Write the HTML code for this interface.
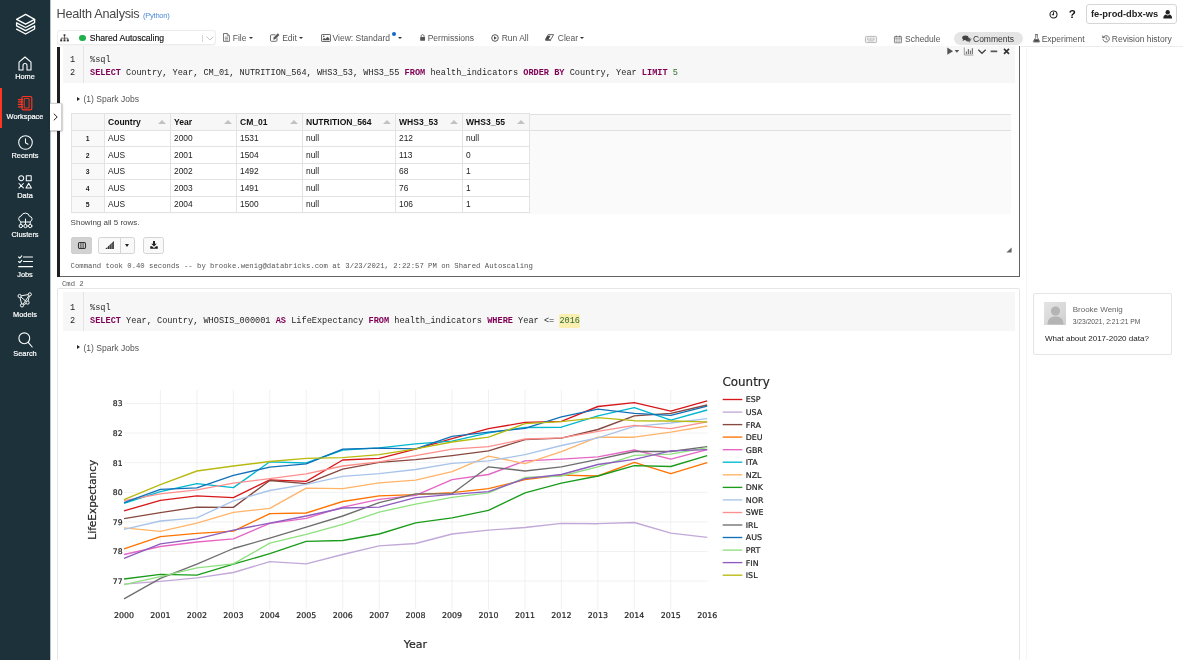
<!DOCTYPE html>
<html><head><meta charset="utf-8"><title>Health Analysis - Databricks</title>
<style>
*{box-sizing:border-box;margin:0;padding:0}
html,body{width:1183px;height:660px;overflow:hidden;background:#fff}
body{font-family:"Liberation Sans",sans-serif;font-size:9px;color:#333;position:relative;will-change:transform}
.abs{position:absolute;white-space:nowrap}
.mono{font-family:"Liberation Mono","DejaVu Sans Mono",monospace}
#side{position:absolute;left:0;top:0;width:50px;height:660px;background:#1c313a}
#side .lbl{position:absolute;left:0;width:50px;text-align:center;color:#fff;font-size:7.4px;line-height:9px;-webkit-text-stroke:0.2px #fff}
#side svg{position:absolute;overflow:visible}
.tb{position:absolute;top:32.5px;font-size:8.5px;line-height:11px;color:#555;white-space:nowrap}
.ic{position:absolute;overflow:visible}
.caret{position:absolute;width:0;height:0;border-left:2.5px solid transparent;border-right:2.5px solid transparent;border-top:2.8px solid #333}
.kw{color:#7f0055;font-weight:bold}
.num{color:#2f6f2f}
table.res{position:absolute;left:70.6px;top:113.2px;border-collapse:collapse;font-size:8.4px;color:#222;table-layout:fixed}
table.res td,table.res th{border:1px solid #e3e3e3;height:16.55px;padding:0 0 1px 3.4px;text-align:left;background:#fff;white-space:nowrap;position:relative}
table.res th{background:#f7f7f7;font-weight:bold;font-size:8.55px;color:#111;padding:1px 0 0 3.4px}
table.res td.ix{background:#f9f9f9;font-weight:bold;font-size:6.8px;text-align:center;padding:0}
table.res th i{position:absolute;right:4px;top:6px;width:0;height:0;border-left:4.2px solid transparent;border-right:4.2px solid transparent;border-bottom:4.3px solid #c2c2c2}
.chart text{stroke:#1e1e1e;stroke-width:0.2px}
</style></head><body>

<!-- ===== sidebar ===== -->
<div id="side">
  <div style="position:absolute;left:0;top:88px;width:2px;height:40px;background:#ff3621"></div>
    <!-- logo -->
  <svg style="left:15px;top:13px" width="21" height="22" viewBox="0 0 21 22" fill="none" stroke="#fff" stroke-width="1.35" stroke-linejoin="round" stroke-linecap="round"><path d="M1.6 6.3 L10.6 1.4 L19.6 6.3 L10.6 11.2 Z"/><path d="M19.6 6.3 V9.6 L10.6 14.5 L1.6 9.8 V12.8 L10.6 17.6 L19.6 12.8 V16 L10.6 21 L1.6 16.1"/></svg>
  <!-- home -->
  <svg style="left:18px;top:56px" width="14" height="15" viewBox="0 0 14 15" fill="none" stroke="#fff" stroke-width="1.1" stroke-linejoin="round" stroke-linecap="round"><path d="M1 6.2 L7 1 L13 6.2 V14 H9 V9.5 a2 2 0 0 0 -4 0 V14 H1 Z"/></svg>
  <!-- workspace -->
  <svg style="left:17px;top:95px" width="16" height="16" viewBox="0 0 16 16" fill="none" stroke="#ff3621" stroke-width="1.15" stroke-linejoin="round" stroke-linecap="round"><rect x="4.9" y="1.5" width="9.9" height="13.4" rx="1.6"/><rect x="7.6" y="3.4" width="4.5" height="9.6" stroke-width="0.9"/><path d="M1.4 4.6H5.6M1.4 6.9H5.6M1.4 9.4H5.6M1.4 11.8H5.6"/></svg>
  <!-- recents -->
  <svg style="left:17.5px;top:134.5px" width="15" height="15" viewBox="0 0 15 15" fill="none" stroke="#fff" stroke-width="1.05" stroke-linecap="round" stroke-linejoin="round"><circle cx="7.5" cy="7.5" r="6.8"/><path d="M7.5 3.8 V7.8 L10 9.3"/></svg>
  <!-- data -->
  <svg style="left:18px;top:174.5px" width="14" height="14" viewBox="0 0 14 14" fill="none" stroke="#fff" stroke-width="1.05" stroke-linejoin="round" stroke-linecap="round"><circle cx="3.2" cy="3.2" r="2.5"/><rect x="8.3" y="0.8" width="4.9" height="4.9"/><path d="M1 8.5 L5.4 12.9 M5.4 8.5 L1 12.9"/><path d="M10.7 8.2 L13.4 13 H8 Z"/></svg>
  <!-- clusters -->
  <svg style="left:16.5px;top:213px" width="17" height="16" viewBox="0 0 17 16" fill="none" stroke="#fff" stroke-width="1" stroke-linejoin="round" stroke-linecap="round"><path d="M3.6 8.6 a2.9 2.9 0 0 1 0.6 -5.6 a4.4 4.4 0 0 1 8.4 0.4 a2.7 2.7 0 0 1 0.8 5.2"/><path d="M8.5 6 V11 M3.8 11.3 V9 H13.2 V11.3"/><circle cx="3.8" cy="13" r="1.7"/><circle cx="8.5" cy="13" r="1.7"/><circle cx="13.2" cy="13" r="1.7"/></svg>
  <!-- jobs -->
  <svg style="left:17.5px;top:254.5px" width="15" height="13" viewBox="0 0 15 13" fill="none" stroke="#fff" stroke-width="1.1" stroke-linecap="round" stroke-linejoin="round"><path d="M5.5 2 H14.5 M5.5 6.5 H14.5 M0.6 11.6 H14.5"/><path d="M0.6 2 L1.8 3.2 L3.8 0.8 M0.6 6.5 L1.8 7.7 L3.8 5.3"/></svg>
  <!-- models -->
  <svg style="left:17px;top:292px" width="16" height="16" viewBox="0 0 16 16" fill="none" stroke="#fff" stroke-width="0.95" stroke-linejoin="round"><circle cx="2.6" cy="4" r="1.6"/><circle cx="12.8" cy="2.4" r="1.6"/><circle cx="10.6" cy="10.6" r="1.6"/><circle cx="5" cy="13.4" r="1.6"/><path d="M4.2 3.8 L11.2 2.6 M12.4 4 L11 9 M9.2 11.4 L6.5 12.8 M3 5.6 L4.6 11.8 M3.9 5 L9.4 9.6 M6.2 12.2 L11.8 3.8"/></svg>
  <!-- search -->
  <svg style="left:17.5px;top:332px" width="15" height="16" viewBox="0 0 15 16" fill="none" stroke="#fff" stroke-width="1.1" stroke-linecap="round"><circle cx="6.3" cy="6.3" r="5.4"/><path d="M10.2 10.4 L14.2 15"/></svg>

  <div class="lbl" style="top:72.0px">Home</div>
  <div class="lbl" style="top:112.0px">Workspace</div>
  <div class="lbl" style="top:151.0px">Recents</div>
  <div class="lbl" style="top:191.0px">Data</div>
  <div class="lbl" style="top:230.0px">Clusters</div>
  <div class="lbl" style="top:270.0px">Jobs</div>
  <div class="lbl" style="top:310.0px">Models</div>
  <div class="lbl" style="top:349.0px">Search</div>
</div>

<!-- ===== header ===== -->
<div class="abs" style="left:50px;top:0;width:1px;height:660px;background:#b9c0c3"></div>
<div class="abs" style="left:56.6px;top:5.5px;font-size:12.7px;line-height:16px;color:#484848;letter-spacing:-0.26px">Health Analysis</div>
<div class="abs" style="left:143px;top:11.1px;font-size:7.6px;line-height:10px;color:#4f8bdb;letter-spacing:-0.28px">(Python)</div>
<svg class="ic" style="left:1048.6px;top:9.5px" width="9" height="9" viewBox="0 0 9 9" fill="none" stroke="#222" stroke-width="1.1" stroke-linecap="round"><circle cx="4.5" cy="4.5" r="3.5"/><path d="M4.5 2.5V4.7H3.2"/></svg>
<div class="abs" style="left:1068.8px;top:7px;font-size:11.6px;line-height:13px;font-weight:bold;color:#111">?</div>
<div class="abs" style="left:1086px;top:4px;width:91px;height:19.5px;border:1px solid #d6d6d6;border-radius:3px;background:#fff"></div>
<div class="abs" style="left:1091px;top:9px;font-size:9.3px;line-height:11px;font-weight:bold;color:#222">fe-prod-dbx-ws</div>
<svg class="ic" style="left:1162.6px;top:9.6px" width="9.4" height="9" viewBox="0 0 10 9" preserveAspectRatio="none" fill="#222"><circle cx="5" cy="2.3" r="2.3"/><path d="M0.3 8.6 C0.3 5.6 2 4.6 3.2 4.6 C3.8 5.2 4.4 5.4 5 5.4 C5.6 5.4 6.2 5.2 6.8 4.6 C8 4.6 9.7 5.6 9.7 8.6 Z"/></svg>

<!-- cluster dropdown -->
<div class="abs" style="left:57px;top:29.5px;width:158.5px;height:15.5px;border:1px solid #ececec;border-radius:3.5px;background:#fff;box-shadow:0 0.5px 1px rgba(0,0,0,0.05)"></div>
<svg class="ic" style="left:60px;top:34px" width="9" height="8" viewBox="0 0 9 8" fill="#333" stroke="#333" stroke-width="0.7"><rect x="3.6" y="0.3" width="1.8" height="1.8" stroke="none"/><path d="M4.5 2V5.5M1.2 5.5V4.1H7.8V5.5" fill="none"/><rect x="0.2" y="5.4" width="2" height="2" stroke="none"/><rect x="3.5" y="5.4" width="2" height="2" stroke="none"/><rect x="6.8" y="5.4" width="2" height="2" stroke="none"/></svg>
<div class="abs" style="left:79.4px;top:35.2px;width:6.3px;height:6.3px;border-radius:4px;background:#1fb24a"></div>
<div class="abs" style="left:89.7px;top:32.5px;font-size:8.65px;line-height:11px;color:#111;-webkit-text-stroke:0.15px #111">Shared Autoscaling</div>
<div class="abs" style="left:201.5px;top:35px;width:1px;height:6.5px;background:#d6d6d6"></div>
<svg class="ic" style="left:206px;top:36px" width="8" height="5" viewBox="0 0 8 5" fill="none" stroke="#bdbdbd" stroke-width="0.9" stroke-linecap="round" stroke-linejoin="round"><path d="M0.8 0.8L4 4L7.2 0.8"/></svg>

<svg class="ic" style="left:222.8px;top:33px" width="7" height="9" viewBox="0 0 7 9" fill="none" stroke="#555" stroke-width="0.8" stroke-linejoin="round"><path d="M0.5 0.5H4.2L6.4 2.7V8.4H0.5Z"/><path d="M4.2 0.5V2.7H6.4M1.8 4.2H5M1.8 5.6H5M1.8 7H5" stroke-width="0.6"/></svg>
<div class="tb" style="left:232.7px">File</div><i class="caret" style="left:249.3px;top:37px"></i>
<svg class="ic" style="left:270px;top:33px" width="10" height="9" viewBox="0 0 10 9" fill="none" stroke="#555" stroke-width="0.85" stroke-linejoin="round" stroke-linecap="round"><path d="M7 5.2V7.4a0.9 0.9 0 0 1-0.9 0.9H1.4a0.9 0.9 0 0 1-0.9-0.9V2.7a0.9 0.9 0 0 1 0.9-0.9H5"/><path d="M3.6 6.2L3.9 4.5L7.8 0.6L9.2 2L5.3 5.9Z" fill="#555" stroke-width="0.4"/></svg>
<div class="tb" style="left:282.2px">Edit</div><i class="caret" style="left:299px;top:37px"></i>
<svg class="ic" style="left:320.7px;top:33.5px" width="10" height="8" viewBox="0 0 10 8" fill="none" stroke="#555" stroke-width="0.85" stroke-linejoin="round"><rect x="0.5" y="0.5" width="9" height="7" rx="0.6"/><path d="M1.6 6.3V5.4L3.2 3.8L4.4 5L6.6 2.8L8.4 4.6V6.3Z" fill="#555" stroke="none"/><circle cx="2.7" cy="2.4" r="0.8" fill="#555" stroke="none"/></svg>
<div class="tb" style="left:332.6px">View: Standard</div>
<div class="abs" style="left:392px;top:31.9px;width:3.8px;height:3.8px;border-radius:2px;background:#1268c9"></div>
<i class="caret" style="left:397.5px;top:37px"></i>
<svg class="ic" style="left:419.7px;top:33.8px" width="5.2" height="7" viewBox="0 0 6 8" fill="#555"><rect x="0.2" y="3.3" width="5.6" height="4.4" rx="0.5"/><path d="M1.3 3.6V2.4a1.7 1.7 0 0 1 3.4 0V3.6" fill="none" stroke="#555" stroke-width="0.9"/></svg>
<div class="tb" style="left:427.7px">Permissions</div>
<svg class="ic" style="left:491.3px;top:33.8px" width="8" height="8" viewBox="0 0 8 8" fill="none" stroke="#444" stroke-width="0.9"><circle cx="4" cy="4" r="3.3"/><path d="M3 2.3L5.8 4L3 5.7Z" fill="#444" stroke="none"/></svg>
<div class="tb" style="left:501.7px">Run All</div>
<svg class="ic" style="left:545.3px;top:34px" width="9" height="7" viewBox="0 0 9 7" fill="none" stroke="#444" stroke-width="0.8" stroke-linejoin="round"><path d="M3.2 0.6H8.6L5.8 5.6H0.4Z"/><path d="M2.6 1.7L0.4 5.6H3.4L5.6 1.7Z" fill="#444" stroke="none"/><path d="M0.4 6.4H6" /></svg>
<div class="tb" style="left:557.8px">Clear</div><i class="caret" style="left:580px;top:37px"></i>

<svg class="ic" style="left:865.3px;top:35.5px" width="12" height="7" viewBox="0 0 12 7" fill="none" stroke="#a8a8a8" stroke-width="0.8"><rect x="0.4" y="0.4" width="11.2" height="6.2" rx="1.2" fill="#f1f1f1"/><path d="M2 2.3H10M2 3.6H10" stroke="#b4b4b4" stroke-width="0.8" stroke-dasharray="1 0.5"/><path d="M3.2 4.9H8.8" stroke="#b4b4b4" stroke-width="0.8"/></svg>
<svg class="ic" style="left:894.3px;top:34.8px" width="8" height="8.5" viewBox="0 0 9 9" fill="none" stroke="#666" stroke-width="0.8"><rect x="0.5" y="1.4" width="8" height="7.1" rx="0.5"/><path d="M0.5 3.2H8.5" /><path d="M2.5 0.3V2.2M6.5 0.3V2.2" stroke-width="1"/><path d="M3.1 3.2V8.5M5.8 3.2V8.5M0.5 5V5H8.5M0.5 6.8H8.5" stroke-width="0.35"/></svg>
<div class="tb" style="left:905px;top:34px">Schedule</div>
<div class="abs" style="left:953.5px;top:32.3px;width:69px;height:13.1px;border-radius:6.5px;background:#e5e5e5"></div>
<svg class="ic" style="left:961.7px;top:35px" width="9" height="8" viewBox="0 0 9 8" fill="#444"><ellipse cx="3.4" cy="2.8" rx="3.2" ry="2.3"/><path d="M1.2 4L0.6 6L3 4.8Z"/><path d="M7.2 2.4a2.6 2 0 0 1 -1.6 4.2 L7.8 7.6 L7.4 6 a2.3 1.8 0 0 0 -0.2 -3.6Z"/><ellipse cx="6" cy="4.6" rx="2.7" ry="1.9" opacity="0.9"/></svg>
<div class="tb" style="left:973px;top:34px;color:#333">Comments</div>
<svg class="ic" style="left:1033px;top:34px" width="7" height="8.5" viewBox="0 0 7 8.5" fill="none" stroke="#555" stroke-width="0.8" stroke-linejoin="round"><path d="M2.1 0.5H4.9M2.7 0.5V3.4L0.4 7.4a0.4 0.4 0 0 0 0.4 0.6H6.2a0.4 0.4 0 0 0 0.4-0.6L4.3 3.4V0.5"/><path d="M1.7 5.2H5.3L6.4 7.7H0.6Z" fill="#444" stroke="none"/></svg>
<div class="tb" style="left:1041.7px;top:34px">Experiment</div>
<svg class="ic" style="left:1102.3px;top:34.7px" width="8" height="8" viewBox="0 0 8 8" fill="none" stroke="#555" stroke-width="0.85" stroke-linecap="round"><path d="M1.3 2.3A3.2 3.2 0 1 1 1 4.6"/><path d="M0.3 0.9L0.7 3L2.8 2.6Z" fill="#555" stroke-width="0.3"/><path d="M4.2 2.3V4.2L5.4 4.9" stroke-width="0.7"/></svg>
<div class="tb" style="left:1111.8px;top:34px">Revision history</div>

<div class="abs" style="left:1021px;top:45.8px;width:162px;height:1px;background:#ececec"></div>
<div class="abs" style="left:1026.3px;top:46.5px;width:1px;height:614px;background:#f6f6f6"></div>
<!-- ===== cell 1 ===== -->
<div class="abs" style="left:59px;top:46px;width:961.3px;height:230.7px;border:1.1px solid #636363;border-top:0;border-left:0;background:#fff"></div>
<div class="abs" style="left:57px;top:46.6px;width:2.6px;height:230.4px;background:#1e1e1e"></div>
<div class="abs" style="left:63px;top:46.3px;width:952.3px;height:36.4px;background:#f7f7f7"></div>
<div class="abs" style="left:83px;top:46.3px;width:1px;height:36.4px;background:#e4e4e4"></div>
<div class="abs mono" style="left:70px;top:53.9px;font-size:8.6px;line-height:12.65px;color:#222">1<br>2</div>
<div class="abs mono" style="left:90px;top:53.9px;font-size:8.6px;line-height:12.65px;color:#262626">%sql<br><span class="kw">SELECT</span> Country, Year, CM_01, NUTRITION_564, WHS3_53, WHS3_55 <span class="kw">FROM</span> health_indicators <span class="kw">ORDER BY</span> Country, Year <span class="kw">LIMIT</span> <span class="num">5</span></div>
<!-- cell controls -->
<svg class="ic" style="left:947px;top:46.9px" width="64" height="9" viewBox="0 0 64 9" fill="#555" stroke="none"><path d="M0.3 0.6L6 4.2L0.3 7.8Z" fill="#555"/><path d="M7.6 3H12.2L9.9 5.8Z"/><path d="M17.3 0.5V8H26.3" fill="none" stroke="#777" stroke-width="0.7"/><path d="M18.8 4.5h1.2V7h-1.2zM20.8 2h1.2V7h-1.2zM22.8 3.4h1.2V7h-1.2zM24.8 1.2h1.2V7h-1.2z" fill="#777"/><path d="M31.3 2.8L35 6.3L38.7 2.8" fill="none" stroke="#444" stroke-width="1.3"/><path d="M43.6 3.5H50.2V5.2H43.6Z"/><path d="M57 1.9L62 6.9M62 1.9L57 6.9" stroke="#333" stroke-width="1.6"/></svg>

<div class="abs" style="left:83.5px;top:94.4px;font-size:8.55px;line-height:11px;color:#555">(1) Spark Jobs</div>
<div class="abs" style="left:76.6px;top:97.3px;width:0;height:0;border-left:3px solid #222;border-top:2.5px solid transparent;border-bottom:2.5px solid transparent"></div>

<div class="abs" style="left:71px;top:113.5px;width:940px;height:100px;background:#fafafa"></div>
<div class="abs" style="left:71px;top:113.5px;width:940px;height:17.5px;background:#f8f8f8;border-top:1px solid #e0e0e0;border-bottom:1px solid #e0e0e0"></div>
<table class="res">
<tr><th style="width:33px"></th><th style="width:66px">Country<i></i></th><th style="width:66px">Year<i></i></th><th style="width:66px">CM_01<i></i></th><th style="width:93px">NUTRITION_564<i></i></th><th style="width:67px">WHS3_53<i></i></th><th style="width:67px">WHS3_55<i></i></th></tr>
<tr><td class="ix">1</td><td>AUS</td><td>2000</td><td>1531</td><td>null</td><td>212</td><td>null</td></tr>
<tr><td class="ix">2</td><td>AUS</td><td>2001</td><td>1504</td><td>null</td><td>113</td><td>0</td></tr>
<tr><td class="ix">3</td><td>AUS</td><td>2002</td><td>1492</td><td>null</td><td>68</td><td>1</td></tr>
<tr><td class="ix">4</td><td>AUS</td><td>2003</td><td>1491</td><td>null</td><td>76</td><td>1</td></tr>
<tr><td class="ix">5</td><td>AUS</td><td>2004</td><td>1500</td><td>null</td><td>106</td><td>1</td></tr>
</table>
<div class="abs" style="left:70.6px;top:218.3px;font-size:8px;line-height:10px;color:#444">Showing all 5 rows.</div>

<div class="abs" style="left:71px;top:237px;width:21.2px;height:16.6px;border:1px solid #cfcfcf;border-radius:2px;background:#d2d2d2"></div>
<svg class="ic" style="left:77.5px;top:241.5px" width="8" height="7" viewBox="0 0 8 7" fill="none" stroke="#333" stroke-width="0.9"><rect x="0.5" y="0.5" width="7" height="6" rx="1.2" stroke-width="1.1"/><path d="M2.9 0.5V6.5M5.1 0.5V6.5" stroke-width="0.9"/></svg>
<div class="abs" style="left:98px;top:237px;width:37.3px;height:16.6px;border:1px solid #d4d4d4;border-radius:2.5px;background:#f9f9f9"></div>
<div class="abs" style="left:120.3px;top:237px;width:1px;height:16.6px;background:#d4d4d4"></div>
<svg class="ic" style="left:104.5px;top:241px" width="9" height="8" viewBox="0 0 9 8" fill="#222"><path d="M0.3 8L8.8 0V8Z" /><path d="M2.6 0V8M4.8 0V8M6.9 0V8" stroke="#f9f9f9" stroke-width="0.6"/></svg>
<i class="caret" style="left:125.4px;top:244px;border-top-color:#222;border-left-width:2.8px;border-right-width:2.8px;border-top-width:3px"></i>
<div class="abs" style="left:142.5px;top:237px;width:21.7px;height:16.6px;border:1px solid #d4d4d4;border-radius:2.5px;background:#f9f9f9"></div>
<svg class="ic" style="left:149.5px;top:241px" width="8" height="8" viewBox="0 0 8 8" fill="#222"><path d="M3 0H5V2.8H6.8L4 5.6L1.2 2.8H3Z"/><path d="M0.2 5.2H2L4 7L6 5.2H7.8V7.8H0.2Z"/></svg>
<div class="abs mono" style="left:70.6px;top:261.8px;font-size:7.28px;line-height:9px;color:#555">Command took 0.40 seconds -- by brooke.wenig@databricks.com at 3/23/2021, 2:22:57 PM on Shared Autoscaling</div>
<svg class="ic" style="left:1005.5px;top:246.5px" width="6" height="6" viewBox="0 0 6 6" fill="#666"><path d="M5.6 0.4V5.6H0.4Z"/></svg>

<div class="abs mono" style="left:62px;top:279.8px;font-size:7.2px;line-height:9px;color:#555">Cmd 2</div>

<!-- ===== cell 2 ===== -->
<div class="abs" style="left:57px;top:288px;width:962.8px;height:380px;border:1px solid #e6e6e6;border-radius:2px;background:#fff"></div>
<div class="abs" style="left:63px;top:292.3px;width:952.3px;height:38.5px;background:#f7f7f7"></div>
<div class="abs" style="left:83px;top:292.3px;width:1px;height:38.5px;background:#e4e4e4"></div>
<div class="abs mono" style="left:70px;top:302.4px;font-size:8.6px;line-height:12.65px;color:#222">1<br>2</div>
<div class="abs mono" style="left:90px;top:302.4px;font-size:8.6px;line-height:12.65px;color:#262626">%sql<br><span class="kw">SELECT</span> Year, Country, WHOSIS_000001 <span class="kw">AS</span> LifeExpectancy <span class="kw">FROM</span> health_indicators <span class="kw">WHERE</span> Year &lt;= <span class="num" style="background:#fbefb0;padding:2.4px 0 2.2px;border-radius:1.5px;color:#2b6a36">2016</span></div>
<div class="abs" style="left:83.5px;top:342.5px;font-size:8.55px;line-height:11px;color:#555">(1) Spark Jobs</div>
<div class="abs" style="left:76.6px;top:345.4px;width:0;height:0;border-left:3px solid #222;border-top:2.5px solid transparent;border-bottom:2.5px solid transparent"></div>

<!-- expand tab -->
<div class="abs" style="left:50px;top:103px;width:11.8px;height:27.5px;background:#fff;border:1px solid #d0d0d0;border-left:0;border-radius:0 2px 2px 0;box-shadow:0.5px 0.5px 1.5px rgba(0,0,0,0.2)"></div>
<svg class="ic" style="left:52.6px;top:113.4px" width="5" height="8" viewBox="0 0 5 8" fill="none" stroke="#222" stroke-width="1"><path d="M0.8 0.7L4.2 4L0.8 7.3"/></svg>

<!-- ===== comments panel ===== -->
<div class="abs" style="left:1033px;top:293px;width:139px;height:61.5px;border:1px solid #e4e4e4;border-radius:2px;background:#fff"></div>
<div class="abs" style="left:1043.5px;top:302px;width:22.5px;height:22.5px;background:linear-gradient(135deg,#e4e4e4,#d0d0d0);overflow:hidden"><svg width="22.5" height="22.5" viewBox="0 0 22.5 22.5" fill="#b4b4b4"><circle cx="11.5" cy="9" r="4.6"/><path d="M3.5 22.5C3.5 16.5 7 14.5 11.5 14.5S19.5 16.5 19.5 22.5Z"/></svg></div>
<div class="abs" style="left:1072.7px;top:304.6px;font-size:8px;line-height:10px;color:#666">Brooke Wenig</div>
<div class="abs" style="left:1072.7px;top:317.5px;font-size:6.7px;line-height:8px;color:#555">3/23/2021, 2:21:21 PM</div>
<div class="abs" style="left:1045px;top:333.6px;font-size:8.03px;line-height:10px;color:#222">What about 2017-2020 data?</div>

<svg class="chart" width="1183" height="660" viewBox="0 0 1183 660" style="position:absolute;left:0;top:0;font-family:'DejaVu Sans','Liberation Sans',sans-serif">
<path d="M160.4 390V609.5M196.9 390V609.5M233.4 390V609.5M269.8 390V609.5M306.2 390V609.5M342.7 390V609.5M379.2 390V609.5M415.6 390V609.5M452.1 390V609.5M488.5 390V609.5M525.0 390V609.5M561.4 390V609.5M597.9 390V609.5M634.3 390V609.5M670.8 390V609.5M124 581.1H707.5M124 551.5H707.5M124 521.9H707.5M124 492.3H707.5M124 462.7H707.5M124 433.1H707.5M124 403.5H707.5" stroke="#ebebeb" stroke-width="0.7" fill="none"/>
<polyline points="124.0,510.9 160.4,500.3 196.9,495.9 233.4,497.6 269.8,479.9 306.2,481.3 342.7,460.0 379.2,458.3 415.6,449.1 452.1,438.7 488.5,428.7 525.0,422.4 561.4,421.3 597.9,406.5 634.3,402.6 670.8,411.2 707.2,400.8" fill="none" stroke="#d8171a" stroke-width="1.35" stroke-linejoin="round"/>
<polyline points="124.0,584.1 160.4,581.4 196.9,577.8 233.4,572.5 269.8,561.6 306.2,563.9 342.7,554.5 379.2,545.9 415.6,543.5 452.1,534.0 488.5,530.2 525.0,527.5 561.4,523.4 597.9,523.7 634.3,522.5 670.8,533.1 707.2,537.3" fill="none" stroke="#c2a8d8" stroke-width="1.35" stroke-linejoin="round"/>
<polyline points="124.0,518.6 160.4,512.7 196.9,507.1 233.4,507.4 269.8,480.5 306.2,483.7 342.7,469.2 379.2,462.4 415.6,459.7 452.1,455.6 488.5,450.9 525.0,439.6 561.4,438.1 597.9,429.5 634.3,415.9 670.8,413.3 707.2,405.0" fill="none" stroke="#87483f" stroke-width="1.35" stroke-linejoin="round"/>
<polyline points="124.0,548.8 160.4,536.7 196.9,533.4 233.4,531.1 269.8,513.6 306.2,513.0 342.7,501.5 379.2,495.9 415.6,494.7 452.1,492.6 488.5,488.7 525.0,479.6 561.4,475.1 597.9,476.0 634.3,462.4 670.8,473.7 707.2,462.7" fill="none" stroke="#ff7300" stroke-width="1.35" stroke-linejoin="round"/>
<polyline points="124.0,554.5 160.4,546.5 196.9,542.0 233.4,538.8 269.8,523.4 306.2,518.3 342.7,507.1 379.2,499.4 415.6,495.3 452.1,479.6 488.5,474.5 525.0,460.9 561.4,459.1 597.9,456.8 634.3,450.0 670.8,459.1 707.2,449.7" fill="none" stroke="#e566c5" stroke-width="1.35" stroke-linejoin="round"/>
<polyline points="124.0,503.3 160.4,491.7 196.9,483.7 233.4,487.6 269.8,461.8 306.2,463.0 342.7,450.0 379.2,447.9 415.6,443.8 452.1,441.1 488.5,432.8 525.0,427.5 561.4,427.2 597.9,415.9 634.3,407.6 670.8,420.1 707.2,410.0" fill="none" stroke="#00b8cf" stroke-width="1.35" stroke-linejoin="round"/>
<polyline points="124.0,527.8 160.4,531.4 196.9,523.1 233.4,512.4 269.8,508.3 306.2,488.2 342.7,488.7 379.2,482.8 415.6,480.2 452.1,471.6 488.5,456.2 525.0,463.6 561.4,451.7 597.9,437.2 634.3,437.2 670.8,432.2 707.2,426.0" fill="none" stroke="#ffb46a" stroke-width="1.35" stroke-linejoin="round"/>
<polyline points="124.0,579.0 160.4,574.3 196.9,575.2 233.4,564.2 269.8,553.6 306.2,541.4 342.7,540.5 379.2,534.0 415.6,522.8 452.1,517.8 488.5,510.4 525.0,492.9 561.4,483.1 597.9,476.0 634.3,465.7 670.8,466.5 707.2,455.6" fill="none" stroke="#1a9c1a" stroke-width="1.35" stroke-linejoin="round"/>
<polyline points="124.0,529.3 160.4,521.0 196.9,517.8 233.4,500.9 269.8,490.5 306.2,484.3 342.7,476.3 379.2,473.7 415.6,469.5 452.1,463.3 488.5,460.9 525.0,454.7 561.4,445.5 597.9,437.8 634.3,426.3 670.8,423.0 707.2,418.6" fill="none" stroke="#a9c4ea" stroke-width="1.35" stroke-linejoin="round"/>
<polyline points="124.0,500.6 160.4,493.8 196.9,489.9 233.4,483.1 269.8,478.7 306.2,473.9 342.7,466.0 379.2,461.8 415.6,455.6 452.1,449.1 488.5,446.7 525.0,439.0 561.4,437.8 597.9,431.3 634.3,425.4 670.8,428.7 707.2,421.9" fill="none" stroke="#ff8f8d" stroke-width="1.35" stroke-linejoin="round"/>
<polyline points="124.0,598.9 160.4,578.4 196.9,564.2 233.4,548.5 269.8,538.2 306.2,527.2 342.7,516.0 379.2,502.7 415.6,493.8 452.1,493.8 488.5,466.8 525.0,471.0 561.4,466.8 597.9,459.4 634.3,451.5 670.8,451.5 707.2,446.7" fill="none" stroke="#6e6e6e" stroke-width="1.35" stroke-linejoin="round"/>
<polyline points="124.0,502.7 160.4,489.3 196.9,487.9 233.4,475.4 269.8,467.1 306.2,463.9 342.7,449.1 379.2,448.2 415.6,448.8 452.1,436.4 488.5,432.2 525.0,428.4 561.4,416.8 597.9,409.1 634.3,413.3 670.8,415.3 707.2,406.2" fill="none" stroke="#1270b8" stroke-width="1.35" stroke-linejoin="round"/>
<polyline points="124.0,584.7 160.4,576.7 196.9,567.8 233.4,563.9 269.8,543.2 306.2,534.3 342.7,524.3 379.2,512.1 415.6,504.1 452.1,497.3 488.5,492.9 525.0,477.5 561.4,476.0 597.9,466.8 634.3,455.3 670.8,454.1 707.2,447.6" fill="none" stroke="#8fe07f" stroke-width="1.35" stroke-linejoin="round"/>
<polyline points="124.0,558.3 160.4,543.8 196.9,538.8 233.4,530.2 269.8,523.1 306.2,516.0 342.7,508.0 379.2,507.1 415.6,497.6 452.1,494.4 488.5,491.7 525.0,478.7 561.4,474.5 597.9,464.5 634.3,459.4 670.8,450.9 707.2,449.7" fill="none" stroke="#8d5cc0" stroke-width="1.35" stroke-linejoin="round"/>
<polyline points="124.0,499.7 160.4,484.6 196.9,471.0 233.4,466.0 269.8,461.5 306.2,458.3 342.7,457.7 379.2,454.7 415.6,448.8 452.1,442.0 488.5,437.2 525.0,423.6 561.4,421.6 597.9,417.7 634.3,420.7 670.8,421.0 707.2,421.9" fill="none" stroke="#b8ba10" stroke-width="1.35" stroke-linejoin="round"/>
<text x="124.0" y="618.3" font-size="7.9" text-anchor="middle" fill="#1e1e1e">2000</text>
<text x="160.4" y="618.3" font-size="7.9" text-anchor="middle" fill="#1e1e1e">2001</text>
<text x="196.9" y="618.3" font-size="7.9" text-anchor="middle" fill="#1e1e1e">2002</text>
<text x="233.4" y="618.3" font-size="7.9" text-anchor="middle" fill="#1e1e1e">2003</text>
<text x="269.8" y="618.3" font-size="7.9" text-anchor="middle" fill="#1e1e1e">2004</text>
<text x="306.2" y="618.3" font-size="7.9" text-anchor="middle" fill="#1e1e1e">2005</text>
<text x="342.7" y="618.3" font-size="7.9" text-anchor="middle" fill="#1e1e1e">2006</text>
<text x="379.2" y="618.3" font-size="7.9" text-anchor="middle" fill="#1e1e1e">2007</text>
<text x="415.6" y="618.3" font-size="7.9" text-anchor="middle" fill="#1e1e1e">2008</text>
<text x="452.1" y="618.3" font-size="7.9" text-anchor="middle" fill="#1e1e1e">2009</text>
<text x="488.5" y="618.3" font-size="7.9" text-anchor="middle" fill="#1e1e1e">2010</text>
<text x="525.0" y="618.3" font-size="7.9" text-anchor="middle" fill="#1e1e1e">2011</text>
<text x="561.4" y="618.3" font-size="7.9" text-anchor="middle" fill="#1e1e1e">2012</text>
<text x="597.9" y="618.3" font-size="7.9" text-anchor="middle" fill="#1e1e1e">2013</text>
<text x="634.3" y="618.3" font-size="7.9" text-anchor="middle" fill="#1e1e1e">2014</text>
<text x="670.8" y="618.3" font-size="7.9" text-anchor="middle" fill="#1e1e1e">2015</text>
<text x="707.2" y="618.3" font-size="7.9" text-anchor="middle" fill="#1e1e1e">2016</text>
<text x="122.6" y="583.9" font-size="7.7" text-anchor="end" fill="#1e1e1e">77</text>
<text x="122.6" y="554.3" font-size="7.7" text-anchor="end" fill="#1e1e1e">78</text>
<text x="122.6" y="524.7" font-size="7.7" text-anchor="end" fill="#1e1e1e">79</text>
<text x="122.6" y="495.1" font-size="7.7" text-anchor="end" fill="#1e1e1e">80</text>
<text x="122.6" y="465.5" font-size="7.7" text-anchor="end" fill="#1e1e1e">81</text>
<text x="122.6" y="435.9" font-size="7.7" text-anchor="end" fill="#1e1e1e">82</text>
<text x="122.6" y="406.3" font-size="7.7" text-anchor="end" fill="#1e1e1e">83</text>
<text x="415.5" y="648" font-size="11" text-anchor="middle" fill="#2a2a2a">Year</text>
<text transform="translate(96.0,499.7) rotate(-90)" font-size="10.5" text-anchor="middle" fill="#2a2a2a">LifeExpectancy</text>
<text x="722.5" y="386" font-size="11.9" fill="#2a2a2a">Country</text>
<path d="M722.7 399.5H742.3" stroke="#d8171a" stroke-width="1.35"/>
<text x="745.8" y="402.4" font-size="7.9" fill="#1e1e1e">ESP</text>
<path d="M722.7 412.1H742.3" stroke="#c2a8d8" stroke-width="1.35"/>
<text x="745.8" y="414.9" font-size="7.9" fill="#1e1e1e">USA</text>
<path d="M722.7 424.6H742.3" stroke="#87483f" stroke-width="1.35"/>
<text x="745.8" y="427.5" font-size="7.9" fill="#1e1e1e">FRA</text>
<path d="M722.7 437.1H742.3" stroke="#ff7300" stroke-width="1.35"/>
<text x="745.8" y="440.0" font-size="7.9" fill="#1e1e1e">DEU</text>
<path d="M722.7 449.7H742.3" stroke="#e566c5" stroke-width="1.35"/>
<text x="745.8" y="452.6" font-size="7.9" fill="#1e1e1e">GBR</text>
<path d="M722.7 462.2H742.3" stroke="#00b8cf" stroke-width="1.35"/>
<text x="745.8" y="465.1" font-size="7.9" fill="#1e1e1e">ITA</text>
<path d="M722.7 474.8H742.3" stroke="#ffb46a" stroke-width="1.35"/>
<text x="745.8" y="477.7" font-size="7.9" fill="#1e1e1e">NZL</text>
<path d="M722.7 487.4H742.3" stroke="#1a9c1a" stroke-width="1.35"/>
<text x="745.8" y="490.2" font-size="7.9" fill="#1e1e1e">DNK</text>
<path d="M722.7 499.9H742.3" stroke="#a9c4ea" stroke-width="1.35"/>
<text x="745.8" y="502.8" font-size="7.9" fill="#1e1e1e">NOR</text>
<path d="M722.7 512.5H742.3" stroke="#ff8f8d" stroke-width="1.35"/>
<text x="745.8" y="515.4" font-size="7.9" fill="#1e1e1e">SWE</text>
<path d="M722.7 525.0H742.3" stroke="#6e6e6e" stroke-width="1.35"/>
<text x="745.8" y="527.9" font-size="7.9" fill="#1e1e1e">IRL</text>
<path d="M722.7 537.5H742.3" stroke="#1270b8" stroke-width="1.35"/>
<text x="745.8" y="540.4" font-size="7.9" fill="#1e1e1e">AUS</text>
<path d="M722.7 550.1H742.3" stroke="#8fe07f" stroke-width="1.35"/>
<text x="745.8" y="553.0" font-size="7.9" fill="#1e1e1e">PRT</text>
<path d="M722.7 562.6H742.3" stroke="#8d5cc0" stroke-width="1.35"/>
<text x="745.8" y="565.5" font-size="7.9" fill="#1e1e1e">FIN</text>
<path d="M722.7 575.2H742.3" stroke="#b8ba10" stroke-width="1.35"/>
<text x="745.8" y="578.1" font-size="7.9" fill="#1e1e1e">ISL</text>
</svg>
</body></html>
